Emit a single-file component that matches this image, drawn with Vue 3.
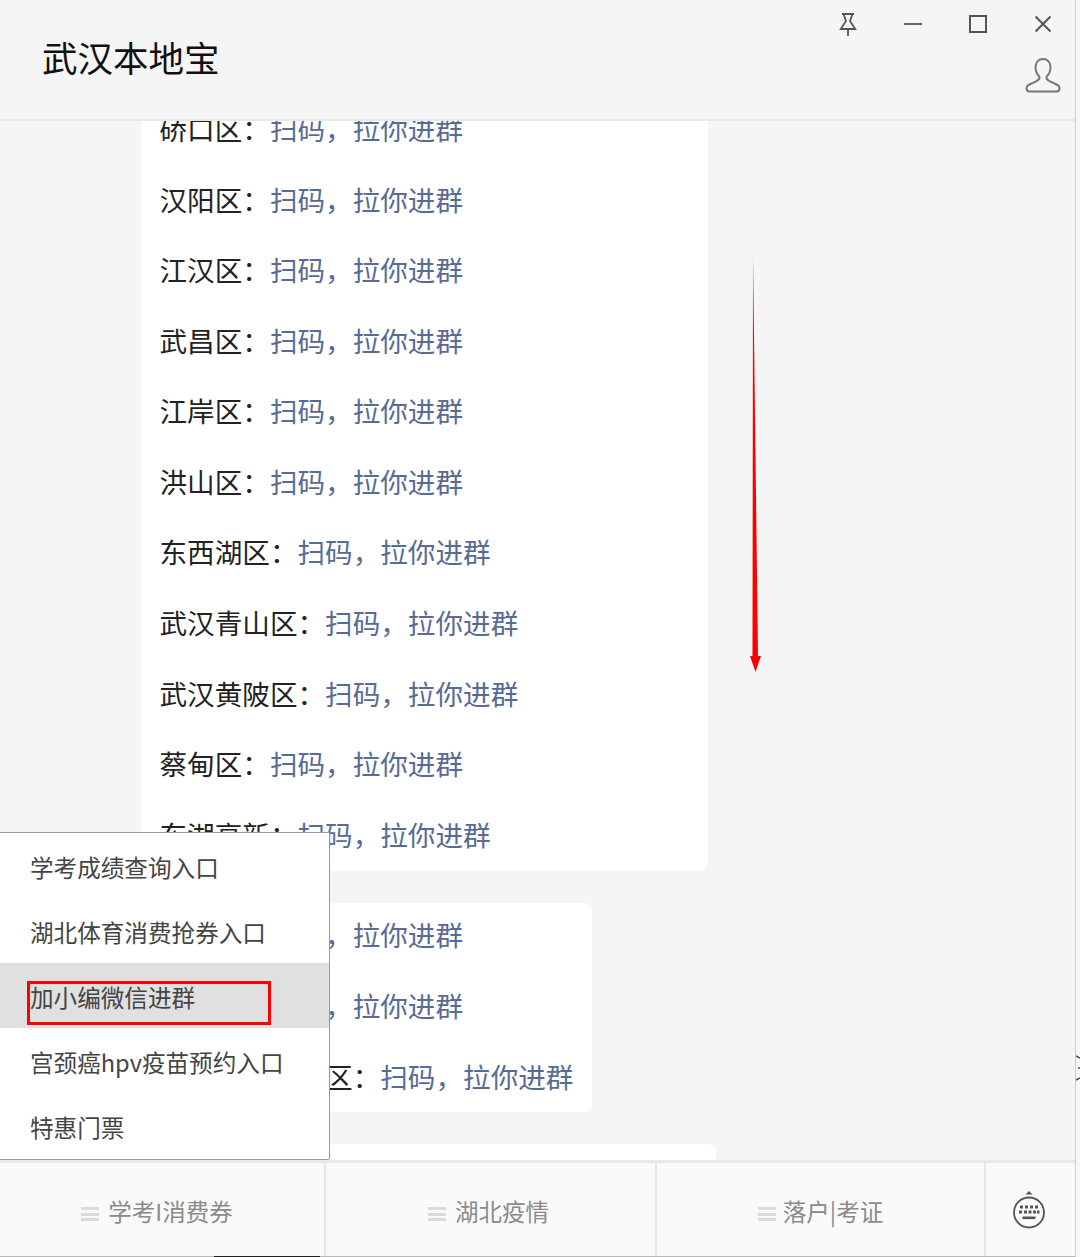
<script setup>
const card1 = ['硚口区', '汉阳区', '江汉区', '武昌区', '江岸区', '洪山区', '东西湖区', '武汉青山区', '武汉黄陂区', '蔡甸区', '东湖高新']
const card2 = ['江夏区', '新洲区', '武汉经济开发区']
const menu = ['学考成绩查询入口', '湖北体育消费抢券入口', '加小编微信进群', '宫颈癌hpv疫苗预约入口', '特惠门票']
const tabs = ['学考I消费券', '湖北疫情', '落户|考证']
</script>

<template>
  <div class="shell">
    <div class="window">
      <header class="head">
        <h1 class="title">武汉本地宝</h1>
        <div class="controls">
          <div class="winbtns">
            <button class="winbtn" aria-label="置顶">
              <svg width="20" height="24" viewBox="0 0 20 24" fill="none" stroke="#555" stroke-width="1.800">
                <path d="M4 2h12M5.500 2l2.500 7-5.200 8h14.400L12 9l2.500-7M10 17v7"/>
              </svg>
            </button>
            <button class="winbtn" aria-label="最小化">
              <svg width="20" height="4" viewBox="0 0 20 4"><path d="M1 2h18" stroke="#555" stroke-width="1.800"/></svg>
            </button>
            <button class="winbtn" aria-label="最大化">
              <svg width="20" height="20" viewBox="0 0 20 20"><rect x="2" y="2" width="16" height="16" fill="none" stroke="#555" stroke-width="2"/></svg>
            </button>
            <button class="winbtn" aria-label="关闭">
              <svg width="18" height="18" viewBox="0 0 18 18"><path d="M1.500 1.500l15 15M16.500 1.500l-15 15" stroke="#555" stroke-width="2"/></svg>
            </button>
          </div>
          <div class="userline">
            <svg width="36" height="36" viewBox="0 0 36 36" fill="none" stroke="#777" stroke-width="2">
              <path d="M18 2c-5 0-7.500 4-7.500 8.500 0 4 1.800 7 3.800 9 .8 2-.5 3.500-3.300 4.800L3.500 28C2 28.800 1.500 30 1.500 31.300c0 2 1 3.200 3 3.200h27c2 0 3-1.200 3-3.200 0-1.300-.5-2.500-2-3.300l-7.500-3.700c-2.800-1.300-4.100-2.800-3.300-4.800 2-2 3.800-5 3.800-9C25.500 6 23 2 18 2z"/>
            </svg>
          </div>
        </div>
      </header>

      <main class="chat">
        <div class="messages">
          <section class="bubble">
            <p v-for="name in card1" :key="name" class="row">{{ name }}：<span class="link">扫码，拉你进群</span></p>
          </section>
          <section class="bubble second">
            <p v-for="name in card2" :key="name" class="row">{{ name }}：<span class="link">扫码，拉你进群</span></p>
          </section>
          <section class="bubble third"></section>
        </div>
      </main>

      <footer class="foot">
        <div v-for="t in tabs" :key="t" class="tab">
          <span class="burger"><i></i><i></i><i></i></span>
          <span class="tabtext">{{ t }}</span>
        </div>
        <div class="kbd">
          <svg width="34" height="38" viewBox="0 0 34 38">
            <path d="M17 0l3.500 3.500h-7z" fill="#555"/>
            <circle cx="17" cy="21.500" r="15" fill="none" stroke="#555" stroke-width="1.800"/>
            <g fill="#555">
              <rect x="8" y="14.500" width="3" height="3"/><rect x="13" y="14.500" width="3" height="3"/><rect x="18" y="14.500" width="3" height="3"/><rect x="23" y="14.500" width="3" height="3"/>
              <rect x="7" y="19.500" width="3" height="3"/><rect x="12" y="19.500" width="3" height="3"/><rect x="16.500" y="19.500" width="3" height="3"/><rect x="21" y="19.500" width="3" height="3"/><rect x="25" y="19.500" width="2.500" height="3"/>
              <rect x="10.500" y="25.500" width="13" height="2.600"/>
            </g>
          </svg>
        </div>
      </footer>

      <div class="menu">
        <div v-for="(m, i) in menu" :key="m" class="item" :class="{ active: i === 2 }">{{ m }}</div>
      </div>
      <div class="redbox"></div>
      <svg class="arrow" width="20" height="424" viewBox="0 0 20 424">
        <path d="M8 2L7.500 404H5L10.500 420 16 404H13z" fill="#f00"/>
      </svg>
      <div class="taskline"></div>
    </div>
    <svg class="peek" width="5" height="34" viewBox="0 0 5 34" fill="none" stroke="#444" stroke-width="1.400">
      <path d="M0 3l4 2M0 27l4-2"/><circle cx="3" cy="15" r="1" fill="#444" stroke="none"/>
    </svg>
  </div>
</template>

<style>
html, body { margin: 0; background: #fff; }
</style>

<style scoped>
.shell {
  position: relative;
  display: flex;
  width: 1080px;
  height: 1257px;
  overflow: hidden;
  font-family: "Noto Sans CJK SC", "Noto Sans", sans-serif;
  background: #f7f7f7;
}
.window {
  position: relative;
  display: flex;
  flex-direction: column;
  width: 1075px;
  height: 1257px;
  background: #f5f5f5;
  border-right: 1px solid #cfcfcf;
  overflow: hidden;
}
.head {
  flex: none;
  display: flex;
  justify-content: space-between;
  height: 119px;
  border-bottom: 2px solid #e8e8e8;
  box-sizing: content-box;
}
.title {
  margin: 0;
  padding: 34px 0 0 42px;
  font-size: 35.500px;
  line-height: 46px;
  font-weight: 400;
  color: #111;
}
.controls { display: flex; flex-direction: column; }
.winbtns { display: flex; }
.winbtn {
  display: flex;
  align-items: center;
  justify-content: center;
  width: 65px;
  height: 48px;
  padding: 0;
  background: none;
  border: 0;
}
.userline {
  display: flex;
  justify-content: flex-end;
  padding: 9px 14px 0 0;
}
.chat {
  flex: 1;
  min-height: 0;
  overflow: hidden;
}
.messages {
  display: flex;
  flex-direction: column;
  gap: 32px;
  margin-top: -26.100px;
  padding-left: 141px;
}
.bubble {
  box-sizing: border-box;
  width: 567px;
  padding-left: 18.500px;
  background: #fff;
  border-radius: 8px;
}
.second { width: 451px; height: 209px; }
.second .row:first-child { margin-top: -2px; }
.third { width: 575px; height: 60px; flex: none; }
.row {
  margin: 0;
  height: 70.600px;
  font-size: 27.600px;
  line-height: 66.600px;
  color: #222;
  white-space: nowrap;
}
.link { color: #576b95; }
.foot {
  flex: none;
  display: grid;
  grid-template-columns: 326px 331px 329px 1fr;
  height: 97px;
  box-sizing: border-box;
  background: #fafafa;
  border-top: 3px solid #e8e8e8;
  border-bottom: 1px solid #b8b8b8;
}
.tab, .kbd {
  display: flex;
  align-items: center;
  justify-content: center;
  border-right: 2px solid #e6e6e6;
  box-sizing: border-box;
}
.tab { gap: 9px; padding-top: 3px; }
.tab:nth-child(1) { padding-right: 10px; }
.tab:nth-child(2) { padding-right: 4px; }
.tab:nth-child(3) { gap: 7px; }
.kbd { border-right: 0; padding-right: 3px; }
.burger {
  display: flex;
  flex-direction: column;
  gap: 2.500px;
  width: 18px;
  margin-top: 6px;
}
.burger i {
  display: block;
  height: 3px;
  background: #dadada;
}
.tabtext {
  font-size: 23.500px;
  line-height: 32px;
  color: #8a8a8a;
}
.menu {
  position: absolute;
  left: 0;
  top: 832px;
  width: 330px;
  height: 328px;
  box-sizing: border-box;
  background: #fff;
  border: 1px solid #9a9a9a;
  border-left: 0;
  border-radius: 0 0 2px 0;
}
.item {
  box-sizing: border-box;
  height: 65px;
  padding: 3px 0 0 30px;
  font-size: 23.600px;
  line-height: 62px;
  color: #444;
  white-space: nowrap;
}
.item.active { background: #e0e0e0; }
.redbox {
  position: absolute;
  left: 27px;
  top: 981px;
  width: 244px;
  height: 44px;
  box-sizing: border-box;
  border: 3px solid #f00;
}
.arrow {
  position: absolute;
  left: 745px;
  top: 252px;
}
.taskline {
  position: absolute;
  left: 214px;
  bottom: 0;
  width: 106px;
  height: 1px;
  background: #222;
}
.peek {
  position: absolute;
  left: 1076px;
  top: 1053px;
}
</style>
